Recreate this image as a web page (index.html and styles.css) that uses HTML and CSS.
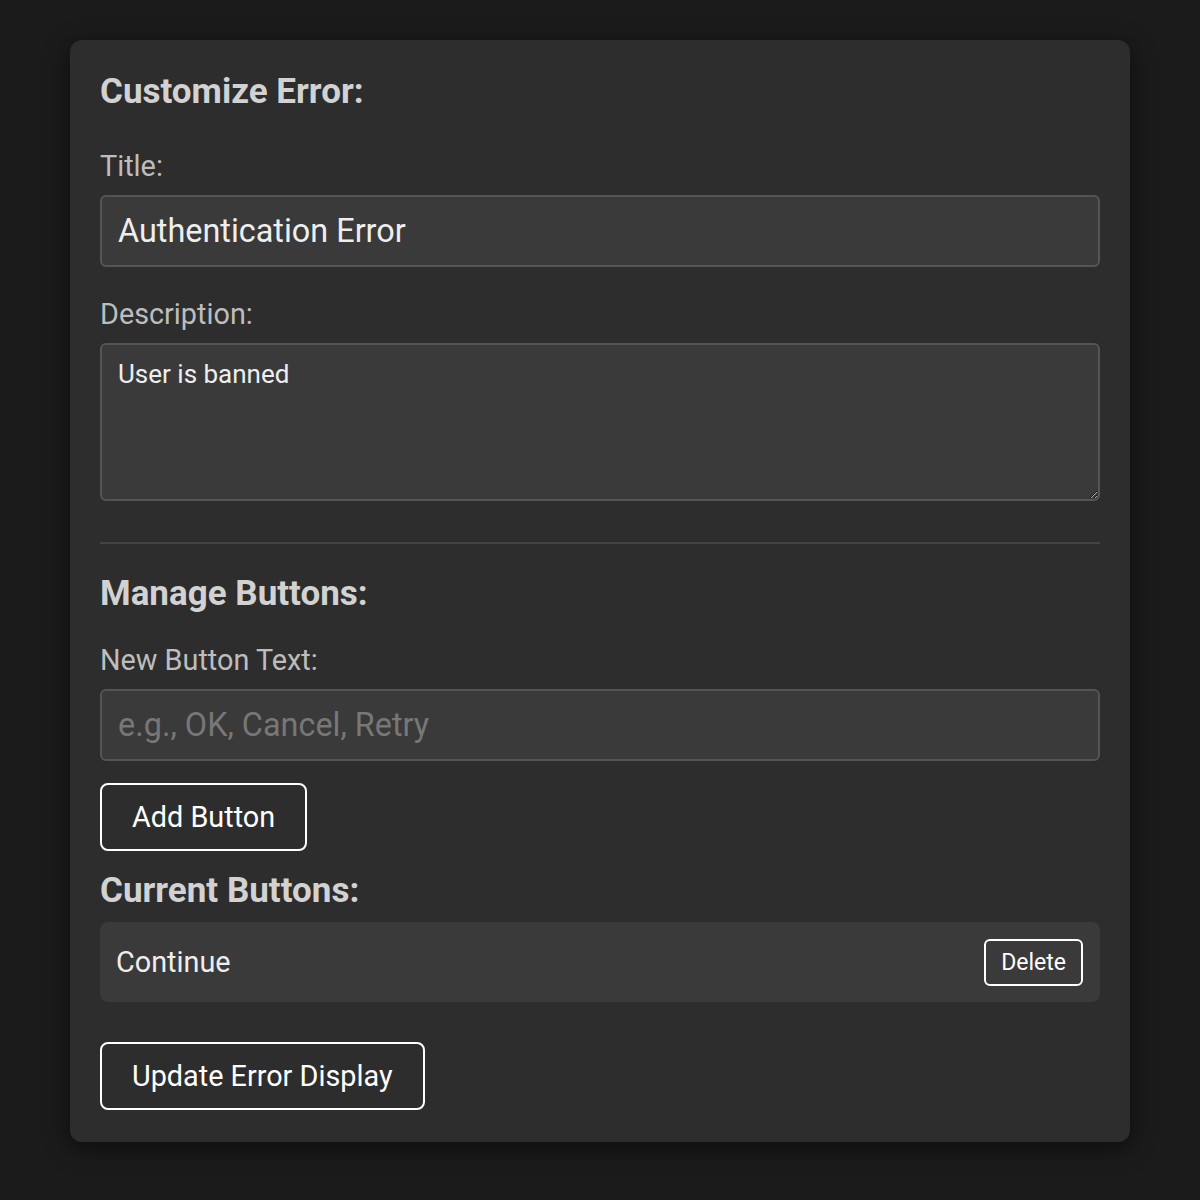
FILE: index.html
```html
<!DOCTYPE html>
<html lang="en">
<head>
    <meta charset="UTF-8">
    <meta name="viewport" content="width=device-width, initial-scale=1.0">
    <title>Customize Error</title>
    <link rel="stylesheet" href="styles.css">
</head>
<body>
    <main class="editor">
        <h2 class="section-title">Customize Error:</h2>
        <label class="field-label" for="errTitle">Title:</label>
        <input type="text" id="errTitle" class="text-input" value="Authentication Error">

        <label class="field-label desc-label" for="errDesc">Description:</label>
        <textarea id="errDesc" class="text-area">User is banned</textarea>

        <hr class="divider">

        <h2 class="section-title">Manage Buttons:</h2>
        <label class="field-label new-label" for="newBtn">New Button Text:</label>
        <input type="text" id="newBtn" class="text-input" placeholder="e.g., OK, Cancel, Retry">
        <div><button class="outline-btn add-btn">Add Button</button></div>

        <h3 class="section-title current-title">Current Buttons:</h3>
        <ul class="button-list">
            <li class="button-item">
                <span>Continue</span>
                <button class="delete-btn">Delete</button>
            </li>
        </ul>

        <div><button class="outline-btn update-btn">Update Error Display</button></div>
    </main>
</body>
</html>
```

FILE: styles.css
```css
*{
    margin:0;
    padding:0;
    box-sizing: border-box;
}
body{
    background-color: #1b1b1b;
    font-family: Roboto, "Liberation Sans", sans-serif;
    padding-top: 40px;
    padding-bottom: 40px;
}
.editor{
    width:1060px;
    margin:0 auto;
    background-color: #2d2d2d;
    border-radius: 12px;
    box-shadow: 0 6px 24px rgba(0,0,0,0.55);
    padding:32px 30px 32px 30px;
    display:flex;
    flex-direction: column;
}
.section-title{
    font-size: 35px;
    font-weight: 700;
    line-height: 40px;
    color:#d2d2d2;
}
.field-label{
    font-size: 28.8px;
    line-height: 34px;
    color:#bdbdbd;
    margin-top: 37px;
    margin-bottom: 12px;
}
.desc-label{
    margin-top: 30px;
    margin-bottom: 12px;
}
.new-label{
    margin-top: 29px;
    margin-bottom: 12px;
}
.text-input,
.text-area{
    width:100%;
    background-color: #3a3a3a;
    border:2px solid #555;
    border-radius: 6px;
    color:#eeeeee;
    font-family: Roboto, "Liberation Sans", sans-serif;
    outline:none;
}
.text-input{
    height:72px;
    padding:0 16px;
    font-size: 32.4px;
}
.text-input::placeholder{
    color:#777;
}
.text-area{
    height:158px;
    padding:14px 16px;
    font-size: 26px;
    line-height: 1.2;
    resize: vertical;
}
.divider{
    border:none;
    border-top:2px solid #444;
    margin-top: 41px;
    margin-bottom: 30px;
}
.outline-btn{
    background: transparent;
    border:2px solid #fff;
    border-radius: 8px;
    color:#fff;
    font-family: Roboto, "Liberation Sans", sans-serif;
    font-size: 28.8px;
    height:68px;
    padding:0 30px;
    cursor:pointer;
}
.add-btn{
    margin-top: 22px;
}
.current-title{
    margin-top: 20px;
}
.button-list{
    list-style: none;
    margin-top: 11px;
}
.button-item{
    display:flex;
    justify-content: space-between;
    align-items: center;
    height:80px;
    padding:0 17px 0 16px;
    background-color: #3a3a3a;
    border-radius: 8px;
    color:#eee;
    font-size: 28.8px;
}
.delete-btn{
    background: transparent;
    border:2px solid #fff;
    border-radius: 6px;
    color:#fff;
    font-family: Roboto, "Liberation Sans", sans-serif;
    font-size: 23px;
    height:47px;
    padding:0 15px;
    cursor:pointer;
}
.update-btn{
    margin-top: 40px;
}
```
